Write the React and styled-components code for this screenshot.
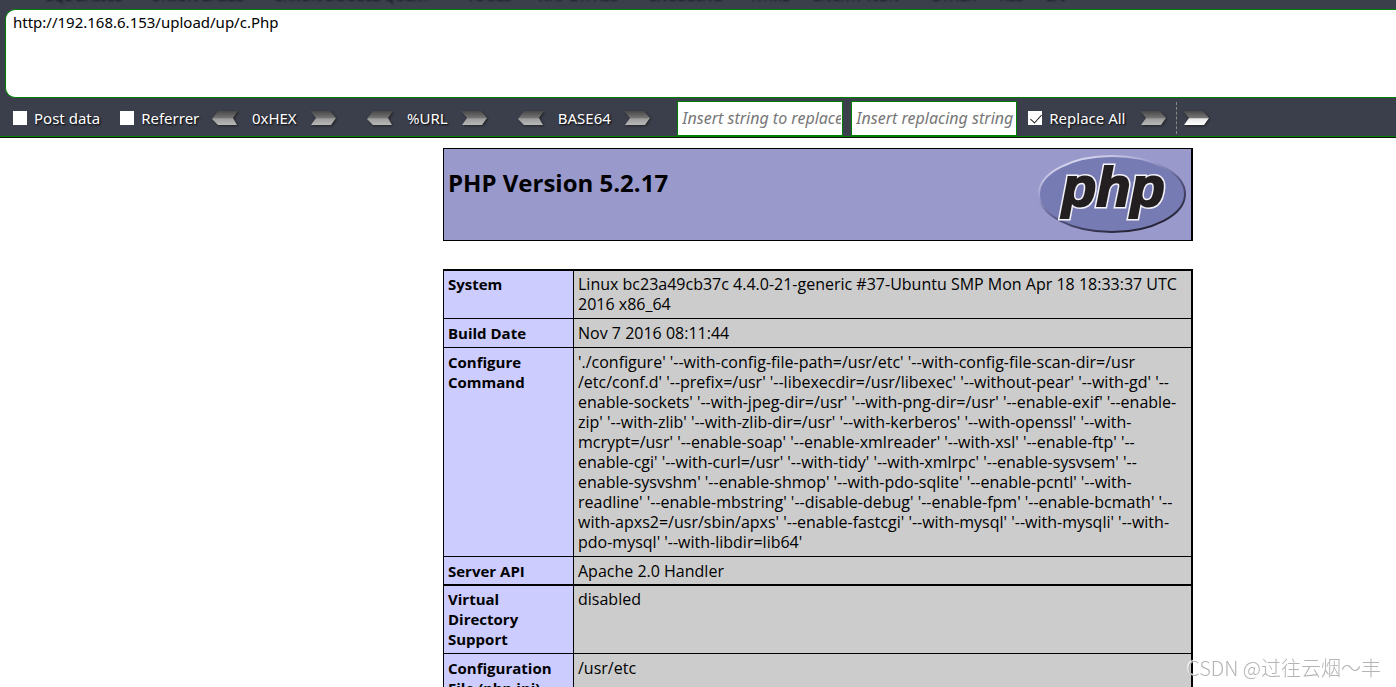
import React, { useState } from "react";
import styled, { createGlobalStyle } from "styled-components";

const menuItems = [
  { name: "SQL BASICS", width: 105 },
  { name: "UNION BASED", width: 124 },
  { name: "ERROR/DOUBLE QUERY", width: 192 },
  { name: "TOOLS", width: 70 },
  { name: "WAF BYPASS", width: 112 },
  { name: "ENCODING", width: 102 },
  { name: "HTML", width: 62 },
  { name: "ENCRYPTION", width: 118 },
  { name: "OTHER", width: 69 },
  { name: "XSS", width: 46 },
  { name: "LFI", width: 30 },
];

const encoders = [
  { name: "0xHEX", width: 48 },
  { name: "%URL", width: 44 },
  { name: "BASE64", width: 56 },
];

const rows = [
  {
    title: ["System"],
    lines: [
      "Linux bc23a49cb37c 4.4.0-21-generic #37-Ubuntu SMP Mon Apr 18 18:33:37 UTC",
      "2016 x86_64",
    ],
    afterThick: true,
  },
  { title: ["Build Date"], lines: ["Nov 7 2016 08:11:44"] },
  {
    title: ["Configure", "Command"],
    lines: [
      "'./configure' '--with-config-file-path=/usr/etc' '--with-config-file-scan-dir=/usr",
      "/etc/conf.d' '--prefix=/usr' '--libexecdir=/usr/libexec' '--without-pear' '--with-gd' '--",
      "enable-sockets' '--with-jpeg-dir=/usr' '--with-png-dir=/usr' '--enable-exif' '--enable-",
      "zip' '--with-zlib' '--with-zlib-dir=/usr' '--with-kerberos' '--with-openssl' '--with-",
      "mcrypt=/usr' '--enable-soap' '--enable-xmlreader' '--with-xsl' '--enable-ftp' '--",
      "enable-cgi' '--with-curl=/usr' '--with-tidy' '--with-xmlrpc' '--enable-sysvsem' '--",
      "enable-sysvshm' '--enable-shmop' '--with-pdo-sqlite' '--enable-pcntl' '--with-",
      "readline' '--enable-mbstring' '--disable-debug' '--enable-fpm' '--enable-bcmath' '--",
      "with-apxs2=/usr/sbin/apxs' '--enable-fastcgi' '--with-mysql' '--with-mysqli' '--with-",
      "pdo-mysql' '--with-libdir=lib64'",
    ],
  },
  { title: ["Server API"], lines: ["Apache 2.0 Handler"], thick: true },
  {
    title: ["Virtual", "Directory", "Support"],
    lines: ["disabled"],
    afterThick: true,
  },
  {
    title: ["Configuration", "File (php.ini)", "Path"],
    lines: ["/usr/etc"],
  },
];

const Arrow = ({ left, bright, label }) => (
  <ArrowButton type="button" aria-label={label}>
    <svg width="28" height="17" viewBox="0 0 28 17">
      <defs>
        <linearGradient id={bright ? "arrowB" : "arrowG"} x2="0" y2="1">
          <stop offset="0" stopColor="#484848" />
          <stop offset="0.5" stopColor={bright ? "#777" : "#757575"} />
          <stop offset="0.55" stopColor={bright ? "#e8e8e8" : "#9c9c9c"} />
          <stop offset="1" stopColor={bright ? "#fff" : "#b8b8b8"} />
        </linearGradient>
      </defs>
      <path
        d={
          left
            ? "M7 1H27L22 8L26 15H7L1 9Z"
            : "M1 1H21L27 8L22 15H2L7 8Z"
        }
        fill={`url(#${bright ? "arrowB" : "arrowG"})`}
      />
    </svg>
  </ArrowButton>
);

const PhpLogo = () => (
  <Logo viewBox="0 0 150 80" role="img" aria-label="PHP logo">
    <defs>
      <linearGradient id="rim" x1="0.2" y1="0" x2="0.8" y2="1">
        <stop offset="0" stopColor="#e4e4f4" />
        <stop offset="0.3" stopColor="#a0a0d0" />
        <stop offset="0.6" stopColor="#50507c" />
        <stop offset="1" stopColor="#1c1a26" />
      </linearGradient>
      <text id="php" x="25" y="52">
        php
      </text>
    </defs>
    <ellipse
      cx="75"
      cy="40"
      rx="73"
      ry="38"
      fill="#777bb3"
      stroke="url(#rim)"
      strokeWidth="2"
    />
    <use href="#php" stroke="#f2f2f8" strokeWidth="5" />
    <use href="#php" fill="#231f20" stroke="#231f20" strokeWidth="2" />
  </Logo>
);

const App = () => {
  const [url, setUrl] = useState("http://192.168.6.153/upload/up/c.Php");
  const [replaceAll, setReplaceAll] = useState(true);

  return (
    <Page>
      <GlobalStyle />
      <HackBar>
        <Menu>
          {menuItems.map((item) => (
            <MenuItem key={item.name} $width={item.width}>
              {item.name}
            </MenuItem>
          ))}
        </Menu>
        <UrlBox
          aria-label="URL"
          spellCheck={false}
          value={url}
          onChange={({ target }) => setUrl(target.value)}
        />
        <Toolbar>
          <Check>
            <input type="checkbox" />
            Post data
          </Check>
          <Check>
            <input type="checkbox" />
            Referrer
          </Check>
          <Encoders>
            {encoders.map((item) => (
              <Encoder key={item.name}>
                <Arrow left label={`Decode ${item.name}`} />
                <EncoderName $width={item.width}>{item.name}</EncoderName>
                <Arrow label={`Encode ${item.name}`} />
              </Encoder>
            ))}
          </Encoders>
          <Replace>
            <ReplaceInput
              aria-label="String to replace"
              placeholder="Insert string to replace"
            />
            <ReplaceInput
              aria-label="Replacing string"
              placeholder="Insert replacing string"
            />
          </Replace>
          <Check>
            <input
              type="checkbox"
              checked={replaceAll}
              onChange={({ target }) => setReplaceAll(target.checked)}
            />
            Replace All
          </Check>
          <RunGroup>
            <Arrow label="Replace" />
            <Divider />
            <Arrow bright label="Run" />
          </RunGroup>
        </Toolbar>
      </HackBar>

      <Main>
        <VersionBox>
          <h1>PHP Version 5.2.17</h1>
          <PhpLogo />
        </VersionBox>
        <InfoTable>
          <tbody>
            {rows.map((row) => (
              <Row
                key={row.title[0]}
                $thick={row.thick}
                $afterThick={row.afterThick}
              >
                <th scope="row">{row.title.join("\n")}</th>
                <td>{row.lines.join("\n")}</td>
              </Row>
            ))}
          </tbody>
        </InfoTable>
      </Main>
      <Watermark>CSDN @过往云烟～丰</Watermark>
    </Page>
  );
};

export default App;

const GlobalStyle = createGlobalStyle`
  * {
    box-sizing: border-box;
  }
  body {
    margin: 0;
    background: #fff;
    color: #000;
    font-family: "Noto Sans", "Noto Sans CJK SC", sans-serif;
    font-size: 15px;
    line-height: 20px;
  }
`;

const Page = styled.div`
  height: 100vh;
  overflow: hidden;
`;

const HackBar = styled.header`
  background: #3b3f4c;
  border-bottom: 1px solid #111;
`;

const Menu = styled.nav`
  display: flex;
  align-items: flex-end;
  height: 9px;
  padding-left: 45px;
  overflow: hidden;
`;

/* only the bottom shadow of the labels is left in view */
const MenuItem = styled.span`
  flex: none;
  width: ${(props) => props.$width}px;
  height: 24px;
  color: transparent;
  font-size: 14px;
  white-space: nowrap;
  text-shadow: 1px 1px 2px #15171d;
`;

const UrlBox = styled.textarea`
  display: block;
  width: calc(100% - 5px);
  height: 89px;
  margin-left: 5px;
  padding: 2px 7px;
  border: 1px solid #008000;
  border-right: none;
  border-radius: 10px 0 0 10px;
  outline: none;
  resize: none;
  background: #fff;
  color: #000;
  font: inherit;
`;

const Toolbar = styled.div`
  display: flex;
  align-items: center;
  height: 39px;
  padding: 2px 0 0 13px;
  border-bottom: 1px solid #008000;
  color: #fff;
  text-shadow: 1px 1px 2px #000;
`;

const Check = styled.label`
  display: flex;
  flex: none;
  align-items: center;
  gap: 7px;
  margin-right: 20px;
  white-space: nowrap;
  input {
    appearance: none;
    position: relative;
    width: 14px;
    height: 14px;
    margin: 0;
    background: #fff;
  }
  input:checked::after {
    content: "";
    position: absolute;
    left: 5px;
    top: 1px;
    width: 5px;
    height: 10px;
    border: solid #222;
    border-width: 0 1px 1px 0;
    transform: rotate(42deg);
  }
`;

const Encoders = styled.div`
  display: flex;
  flex: none;
  gap: 29px;
  margin-left: -8px;
`;

const Encoder = styled.div`
  display: flex;
  align-items: center;
  gap: 11px;
`;

const EncoderName = styled.span`
  width: ${(props) => props.$width}px;
  text-align: center;
  white-space: nowrap;
`;

const ArrowButton = styled.button`
  flex: none;
  height: 17px;
  padding: 0;
  border: none;
  background: none;
  svg {
    display: block;
    filter: drop-shadow(1px 1px 1px #222);
  }
`;

const Replace = styled.div`
  display: flex;
  flex: none;
  gap: 8px;
  margin: 0 11px 0 26px;
`;

const ReplaceInput = styled.input`
  width: 166px;
  height: 35px;
  padding: 0 1px 0 4px;
  border: 1px solid #008000;
  outline: none;
  background: #fff;
  font: inherit;
  font-size: 16px;
  font-style: italic;
  &::placeholder {
    color: #777;
    opacity: 1;
  }
`;

const RunGroup = styled.div`
  display: flex;
  align-items: center;
  margin-left: -6px;
`;

const Divider = styled.span`
  height: 32px;
  margin: 0 5px 0 9px;
  border-left: 1px dashed #888;
`;

const Main = styled.main`
  padding: 10px 0 0 240px;
`;

const VersionBox = styled.section`
  display: flex;
  justify-content: space-between;
  width: 750px;
  height: 93px;
  margin: 0 auto 28px;
  padding: 5px 4px;
  border: 1px solid #000;
  border-right-width: 2px;
  background: #9999cc;
  h1 {
    margin: 14px 0 0;
    font-family: "Open Sans", sans-serif;
    font-size: 24px;
    font-weight: bold;
    line-height: 30px;
  }
`;

const Logo = styled.svg`
  width: 150px;
  height: 80px;
  text {
    font-family: "Liberation Sans", Arial, sans-serif;
    font-size: 56px;
    font-weight: bold;
    font-style: italic;
  }
`;

const InfoTable = styled.table`
  width: 750px;
  margin: 0 auto;
  border: solid #000;
  border-width: 2px 2px 0 1px;
  border-spacing: 0;
  table-layout: fixed;
`;

const Row = styled.tr`
  th,
  td {
    padding: ${(props) => (props.$afterThick ? 3 : 4)}px 0
      ${(props) => (props.$thick ? 3 : 4)}px 4px;
    border-bottom: ${(props) => (props.$thick ? 2 : 1)}px solid #000;
    font-family: "Open Sans", sans-serif;
    vertical-align: top;
    text-align: left;
    white-space: pre;
  }
  th {
    width: 130px;
    border-right: 1px solid #000;
    background: #ccccff;
    font-weight: bold;
  }
  td {
    background: #cccccc;
    font-size: 16px;
  }
`;

const Watermark = styled.div`
  position: fixed;
  right: 15px;
  bottom: 4px;
  color: #b4b4b4;
  font-family: "Noto Sans CJK SC", sans-serif;
  font-size: 20px;
  font-weight: 300;
  line-height: 30px;
  text-shadow: -1px -1px 0 #fff;
`;
